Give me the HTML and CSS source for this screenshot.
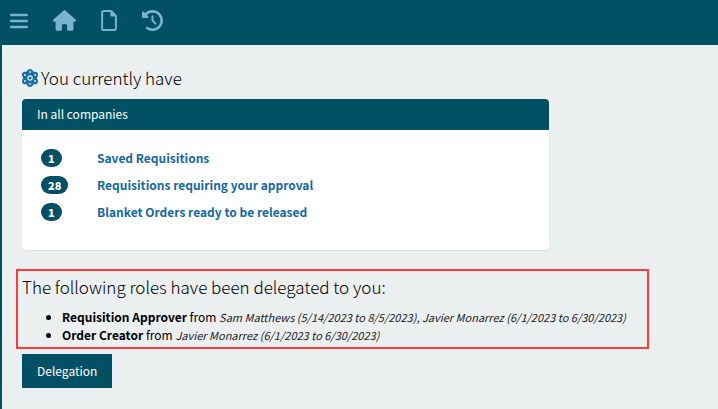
FILE: index.html
```html
<!DOCTYPE html>
<html lang="en">
<head>
    <meta charset="UTF-8">
    <meta name="viewport" content="width=device-width, initial-scale=1.0">
    <title>Home</title>
    <link rel="stylesheet" href="styles.css">
</head>
<body>
    <nav class="topbar">
        <button class="nav-button" type="button" aria-label="Menu">
            <svg width="18" height="16" viewBox="0 0 18 16" fill="none" stroke="currentColor" stroke-width="2.6" stroke-linecap="round">
                <path d="M1.3 2h15.4M1.3 8h15.4M1.3 14h15.4"/>
            </svg>
        </button>
        <a class="nav-button" href="#" aria-label="Home">
            <svg width="23" height="21" viewBox="0 0 576 512" fill="currentColor">
                <path d="M575.8 255.500c0 18-15 32.100-32 32.100h-32l.7 160.200c0 2.700-.2 5.400-.5 8.100V472c0 22.100-17.900 40-40 40H392c-22.100 0-40-17.900-40-40v-88c0-17.700-14.300-32-32-32h-64c-17.700 0-32 14.300-32 32v88c0 22.100-17.900 40-40 40H104c-22.100 0-40-17.900-40-40V287.600H32c-18 0-32-14-32-32.100 0-9 3-17 10-24L266.400 8c7-7 15-8 22-8s15 2 21 7l255.400 224.500c8 7 12 15 11 24z"/>
            </svg>
        </a>
        <a class="nav-button" href="#" aria-label="New document">
            <svg width="16" height="21" viewBox="0 0 384 512" fill="currentColor">
                <path d="M320 464c8.800 0 16-7.200 16-16V160h-80c-17.700 0-32-14.300-32-32V48H64c-8.800 0-16 7.200-16 16v384c0 8.800 7.200 16 16 16h256zM0 64C0 28.700 28.700 0 64 0h165.500c17 0 33.300 6.700 45.300 18.700l90.500 90.500c12 12 18.700 28.300 18.700 45.300V448c0 35.300-28.700 64-64 64H64c-35.300 0-64-28.700-64-64V64z"/>
            </svg>
        </a>
        <a class="nav-button" href="#" aria-label="History">
            <svg width="21" height="21" viewBox="0 0 512 512" fill="currentColor">
                <path d="M75 75L41 41C25.900 25.900 0 36.600 0 57.900V168c0 13.300 10.700 24 24 24h110.100c21.400 0 32.100-25.900 17-41l-30.800-30.800C155 85.500 203 64 256 64c106 0 192 86 192 192s-86 192-192 192c-40.800 0-78.600-12.700-109.700-34.400-14.500-10.100-34.400-6.600-44.600 7.900s-6.600 34.400 7.900 44.600C151.200 495 201.700 512 256 512c141.400 0 256-114.600 256-256S397.400 0 256 0C185.300 0 121.300 28.700 75 75zm181 53c-13.300 0-24 10.700-24 24v104c0 6.400 2.500 12.500 7 17l72 72c9.400 9.400 24.600 9.400 33.900 0s9.400-24.600 0-33.900l-65-65V152c0-13.300-10.700-24-24-24z"/>
            </svg>
        </a>
    </nav>

    <main class="content">
        <h2 class="heading">
            <svg class="atom" width="16" height="18" viewBox="0 0 16 18">
                <path fill="currentColor" d="M8 0c1.700 0 2.900 1.200 3.500 2.800 2-.3 3.500.1 4.200 1.400.7 1.300.2 3-1 4.800 1.200 1.800 1.700 3.500 1 4.800-.7 1.300-2.200 1.700-4.200 1.400C10.900 16.800 9.700 18 8 18s-2.900-1.200-3.500-2.800c-2 .3-3.500-.1-4.200-1.400-.7-1.300-.2-3 1-4.800C.1 7.200-.4 5.500.3 4.200 1 2.900 2.500 2.500 4.500 2.800 5.100 1.200 6.300 0 8 0z"/>
                <g fill="#ebeff0">
                    <circle cx="8" cy="3" r="0.900"/>
                    <circle cx="8" cy="15" r="0.900"/>
                    <circle cx="2.900" cy="6" r="0.900"/>
                    <circle cx="13.100" cy="6" r="0.900"/>
                    <circle cx="2.900" cy="12" r="0.900"/>
                    <circle cx="13.100" cy="12" r="0.900"/>
                </g>
                <circle cx="8" cy="9" r="2.200" fill="none" stroke="#ebeff0" stroke-width="1.200"/>
            </svg>
            You currently have
        </h2>

        <section class="card">
            <h3 class="card-title">In all companies</h3>
            <table class="counts">
                <tr>
                    <td><span class="badge">1</span></td>
                    <td><a href="#">Saved Requisitions</a></td>
                </tr>
                <tr>
                    <td><span class="badge">28</span></td>
                    <td><a href="#">Requisitions requiring your approval</a></td>
                </tr>
                <tr>
                    <td><span class="badge">1</span></td>
                    <td><a href="#">Blanket Orders ready to be released</a></td>
                </tr>
            </table>
        </section>

        <section class="delegated">
            <h2 class="heading">The following roles have been delegated to you:</h2>
            <ul class="roles">
                <li><b>Requisition Approver</b> from <i>Sam Matthews (5/14/2023 to 8/5/2023), Javier Monarrez (6/1/2023 to 6/30/2023)</i></li>
                <li><b>Order Creator</b> from <i>Javier Monarrez (6/1/2023 to 6/30/2023)</i></li>
            </ul>
        </section>

        <button class="delegation-button" type="button">Delegation</button>
    </main>
</body>
</html>
```
FILE: styles.css
```css
* {
    box-sizing: border-box;
}

body {
    margin: 0;
    min-height: 100vh;
    display: flex;
    flex-direction: column;
    background: #ebeff0;
    color: #000;
    font-family: "Source Sans Pro", "Noto Sans CJK SC", sans-serif;
    font-size: 12px;
    line-height: 18px;
}

.topbar {
    display: flex;
    align-items: center;
    gap: 25px;
    height: 45px;
    padding: 0 10px 4px;
    background: #025064;
}

.nav-button {
    display: flex;
    padding: 0;
    border: none;
    background: none;
    color: #79b4cf;
    cursor: pointer;
}

.content {
    flex: 1;
    padding: 19px 20px;
    border-left: 2px solid #025064;
}

.heading {
    display: flex;
    align-items: center;
    gap: 3px;
    margin: 0;
    font-size: 17px;
    font-weight: 300;
    line-height: 28px;
}

.atom {
    color: #1a6ea3;
}

.card {
    max-width: 527px;
    margin-top: 7px;
    border-radius: 4px;
    background: #fff;
    box-shadow: 0 1px 1px rgba(0, 0, 0, 0.06);
    overflow: hidden;
}

.card-title {
    margin: 0;
    padding: 6px 15px 7px;
    background: #025064;
    color: #fff;
    font-size: 12px;
    font-weight: 400;
}

.counts {
    padding: 14px 19px 25px;
    border-spacing: 0;
}

.counts td {
    height: 27px;
    padding: 0;
}

.counts td:first-child {
    width: 56px;
}

.counts a {
    color: #1468a0;
    font-weight: bold;
    text-decoration: none;
}

.counts a:hover {
    text-decoration: underline;
}

.badge {
    display: inline-block;
    padding: 0 7px;
    border-radius: 9px;
    background: #025064;
    color: #fff;
    font-size: 11px;
    font-weight: 900;
}

.delegated {
    max-width: 633px;
    margin: 19px 0 5px -6px;
    padding: 2px 4px 3px;
    border: 2px solid #fc3d3d;
}

.roles {
    margin: 7px 0 0;
    padding-left: 40px;
}

.roles i {
    color: #222;
    font-size: 11px;
}

.delegation-button {
    padding: 8px 15px;
    border: none;
    background: #025064;
    color: #fff;
    font: inherit;
    cursor: pointer;
}
```
